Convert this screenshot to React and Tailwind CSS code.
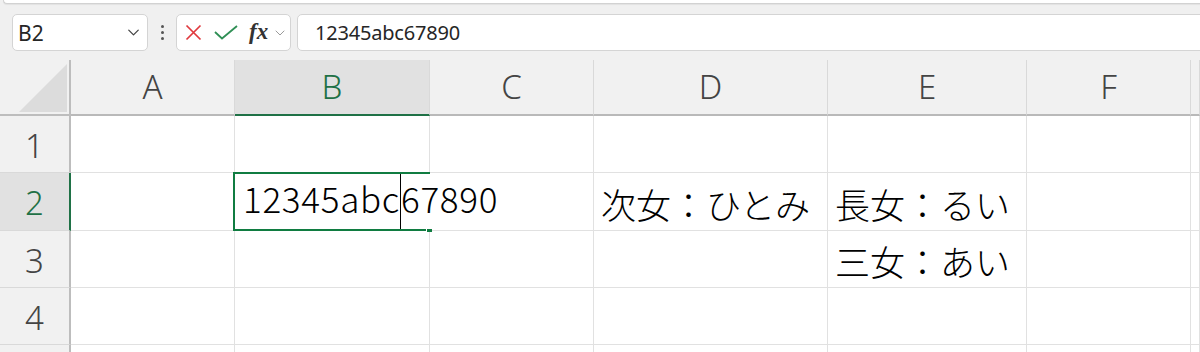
import { ChevronDown } from "lucide-react";

const COLS = ["A", "B", "C", "D", "E", "F", ""];
const ROWS = [1, 2, 3, 4, 5];

const cells = {
  D2: "次女：ひとみ",
  E2: "長女：るい",
  E3: "三女：あい",
};

const GREEN = "border-[#107c41]";

function FormulaBar() {
  return (
    <div className="flex h-[37px] mt-[10px] pl-[12px]">
      {/* Name box */}
      <div className="w-[136px] bg-white border border-[#d4d4d4] rounded-[5px] flex items-center pl-[5px] pr-[4px]">
        <span className="flex-1 text-[21px] text-[#262626] leading-none pt-[2px]">B2</span>
        <ChevronDown className="w-[19px] h-[19px] text-[#444]" strokeWidth={1.6} />
      </div>

      {/* More dots */}
      <div className="w-[28px] flex flex-col items-center justify-center gap-[3px]">
        <span className="w-[3px] h-[3px] bg-[#555] rounded-full" />
        <span className="w-[3px] h-[3px] bg-[#555] rounded-full" />
        <span className="w-[3px] h-[3px] bg-[#555] rounded-full" />
      </div>

      {/* Cancel / enter / fx */}
      <div className="w-[115px] bg-white border border-[#d4d4d4] rounded-[5px] flex items-center pl-[8px]">
        <svg width="17" height="17" viewBox="0 0 17 17" className="mr-[12px]">
          <path d="M1.5 1.5 L15.5 15.5 M15.5 1.5 L1.5 15.5" stroke="#e0393e" strokeWidth="1.7" fill="none" />
        </svg>
        <svg width="24" height="15" viewBox="0 0 24 15" className="mr-[11px]">
          <path d="M1 7 L8 13.5 L23 1" stroke="#2f8f55" strokeWidth="1.8" fill="none" />
        </svg>
        <span className="font-['Liberation_Serif',serif] italic font-bold text-[23px] text-[#333] leading-none -mt-[3px]">
          fx
        </span>
        <ChevronDown className="w-[16px] h-[16px] text-[#9a9a9a] ml-[4px]" strokeWidth={1.5} />
      </div>

      {/* Formula input */}
      <div className="flex-1 ml-[6px] -mr-[12px] bg-white border border-[#d4d4d4] rounded-[5px] flex items-center pl-[17px]">
        <span className="text-[20px] text-[#262626] tracking-[-0.2px] pt-[1px]">12345abc67890</span>
      </div>
    </div>
  );
}

function ColHeader({ label }) {
  const selected = label === "B";
  return (
    <div
      className={`flex items-center justify-center border-r border-[#d9d9d9] border-b-2 text-[33px] font-light leading-none pb-[2px] ${
        selected
          ? "bg-[#e1e1e1] text-[#1f7146] border-b-[#1f7146]"
          : "bg-[#f1f1f1] text-[#444] border-b-[#b9b9b9]"
      }`}
    >
      {label}
    </div>
  );
}

function RowHeader({ n }) {
  const selected = n === 2;
  return (
    <div
      className={`flex items-center justify-center border-b border-[#d9d9d9] border-r-2 text-[33px] font-light leading-none pt-[2px] ${
        selected
          ? "bg-[#e1e1e1] text-[#1f7146] border-r-[#1f7146]"
          : "bg-[#f1f1f1] text-[#444] border-r-[#bdbdbd]"
      }`}
    >
      {n < 5 ? n : ""}
    </div>
  );
}

function Cell({ col, row }) {
  const key = col + row;
  const isActive = key === "B2";

  if (isActive) {
    return (
      <div className="relative bg-white border-b border-[#e1e1e1] flex items-center pl-[8px] z-10">
        <span className="text-[35px] font-light leading-none whitespace-nowrap text-black tracking-[0.7px] font-['Noto_Sans_CJK_JP',sans-serif] pt-[3px]">
          12345abc
          <span className="inline-block w-px h-[56px] bg-black align-middle -mt-[3px]" />
          67890
        </span>
        {/* selection border */}
        <div className={`absolute -left-[2px] -top-[1px] -bottom-[1px] right-0 border-2 border-r-0 ${GREEN} pointer-events-none`} />
        <div className="absolute -right-[2px] -bottom-[2px] w-[6px] h-[4px] bg-[#107c41] border-t border-l border-white" />
      </div>
    );
  }

  const text = cells[key];
  return (
    <div className="border-r border-b border-[#e1e1e1] bg-white flex items-center pl-[7px]">
      {text && (
        <span className="text-[35px] font-light leading-none whitespace-nowrap text-black font-['Noto_Sans_CJK_JP',sans-serif] pt-[3px]">
          {text}
        </span>
      )}
    </div>
  );
}

export default function App() {
  return (
    <div className="w-[1200px] h-[352px] overflow-hidden bg-[#f0f0f0] font-['Noto_Sans','Noto_Sans_CJK_JP',sans-serif]">
      {/* ribbon edge */}
      <div className="h-[4px] ml-[3px] bg-white rounded-bl-[8px] border-b border-l border-[#d2d2d2] shadow-[0_1px_1px_rgba(0,0,0,0.06)]" />

      <FormulaBar />

      {/* Sheet grid */}
      <div className="mt-[9px] grid grid-cols-[71px_164px_195px_164px_234px_199px_164px_1fr] grid-rows-[56px_57px_58px_57px_57px_57px]">
        {/* select-all corner */}
        <div className="bg-[#f1f1f1] border-r-2 border-b-2 border-[#bdbdbd] flex items-end justify-end pr-[2px] pb-[2px]">
          <svg width="48" height="48" viewBox="0 0 48 48">
            <path d="M48 0 L48 48 L0 48 Z" fill="#dcdcdc" />
          </svg>
        </div>
        {COLS.map((c, i) => (
          <ColHeader key={"h" + i} label={c} />
        ))}

        {ROWS.map((r) => [
          <RowHeader key={"r" + r} n={r} />,
          ...COLS.map((c, i) => <Cell key={r + "-" + i} col={c || "G"} row={r} />),
        ])}
      </div>
    </div>
  );
}
